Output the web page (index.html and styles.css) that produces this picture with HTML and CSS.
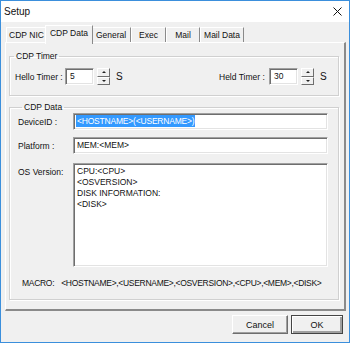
FILE: index.html
```html
<!DOCTYPE html>
<html lang="en">
<head>
  <meta charset="UTF-8">
  <meta name="viewport" content="width=device-width, initial-scale=1.0">
  <title>Setup</title>
  <link rel="stylesheet" href="styles.css">
</head>
<body>
  <div class="window">
    <!-- Barre de titre -->
    <div class="titlebar">
      <span class="title">Setup</span>
      <svg class="close" width="9" height="9" viewBox="0 0 9 9">
        <path d="M0.5 0.5 L8.5 8.5 M8.5 0.5 L0.5 8.5" stroke="#111" stroke-width="1" fill="none"/>
      </svg>
    </div>

    <div class="client">
      <!-- Onglets -->
      <div class="tabs">
        <div class="tab tab-nic">CDP NIC</div>
        <div class="tab tab-data active">CDP Data</div>
        <div class="tab tab-general">General</div>
        <div class="tab tab-exec">Exec</div>
        <div class="tab tab-mail">Mail</div>
        <div class="tab tab-maildata">Mail Data</div>
      </div>

      <div class="panel">
        <fieldset class="group timer-group">
          <legend>CDP Timer</legend>
          <div class="timer-row">
            <div class="timer">
              <span class="timer-label">Hello Timer :</span>
              <span class="field num">5</span>
              <span class="spin"><span class="spin-btn up"></span><span class="spin-btn down"></span></span>
              <span class="unit">S</span>
            </div>
            <div class="timer timer-right">
              <span class="timer-label">Held Timer :</span>
              <span class="field num">30</span>
              <span class="spin"><span class="spin-btn up"></span><span class="spin-btn down"></span></span>
              <span class="unit">S</span>
            </div>
          </div>
        </fieldset>

        <fieldset class="group data-group">
          <legend>CDP Data</legend>
          <div class="form-row">
            <span class="form-label">DeviceID :</span>
            <div class="field wide"><span class="sel">&lt;HOSTNAME&gt;(&lt;USERNAME&gt;)</span></div>
          </div>
          <div class="form-row row-platform">
            <span class="form-label">Platform :</span>
            <div class="field wide">MEM:&lt;MEM&gt;</div>
          </div>
          <div class="form-row row-os">
            <span class="form-label">OS Version:</span>
            <div class="field wide multiline">
              <div>CPU:&lt;CPU&gt;</div>
              <div>&lt;OSVERSION&gt;</div>
              <div>DISK INFORMATION:</div>
              <div>&lt;DISK&gt;</div>
            </div>
          </div>
          <p class="macro"><span class="macro-key">MACRO:</span>&lt;HOSTNAME&gt;,&lt;USERNAME&gt;,&lt;OSVERSION&gt;,&lt;CPU&gt;,&lt;MEM&gt;,&lt;DISK&gt;</p>
        </fieldset>
      </div>

      <!-- Boutons -->
      <div class="buttons">
        <button class="btn btn-cancel">Cancel</button>
        <button class="btn btn-ok">OK</button>
      </div>
    </div>
  </div>
</body>
</html>
```

FILE: styles.css
```css
body {
  margin: 0;
  font-family: 'Liberation Sans', Arial, sans-serif;
  font-size: 8.5px;
  color: #111;
}

.window {
  width: 350px;
  height: 343px;
  box-sizing: border-box;
  border: 1px solid #3b8fdc;
  display: flex;
  flex-direction: column;
  background-color: #f0f0f0;
}

.titlebar {
  height: 21px;
  background-color: #fff;
  display: flex;
  align-items: center;
  justify-content: space-between;
  padding: 0 7px 0 3px;
}

.title {
  font-size: 10px;
}

.client {
  flex: 1;
  padding: 3px 3px 0 4px;
}

/* Onglets */
.tabs {
  display: flex;
  align-items: flex-end;
  height: 17px;
  padding-left: 1px;
  position: relative;
  z-index: 1;
}

.tab {
  height: 15px;
  box-sizing: border-box;
  border-top: 1px solid #fff;
  border-left: 1px solid #fff;
  border-right: 1px solid #8a8a8a;
  text-align: center;
  line-height: 14px;
  white-space: nowrap;
}

.tab-nic { width: 41px; }
.tab-general { width: 40px; }
.tab-exec { width: 35px; }
.tab-mail { width: 34px; }
.tab-maildata { width: 44px; }

.tab.active {
  width: 48px;
  height: 19px;
  margin: 0 -2px -2px -2px;
  background-color: #f0f0f0;
  line-height: 15px;
  position: relative;
  z-index: 2;
  padding-bottom: 2px;
}

.panel {
  height: 269px;
  box-sizing: border-box;
  border-top: 1px solid #fff;
  border-left: 1px solid #fff;
  border-right: 2px solid #8a8a8a;
  border-bottom: 2px solid #8a8a8a;
  padding: 0 5px 0 3px;
}

/* Cadres */
.group {
  margin: 0;
  padding: 0;
  border: 1px solid #d0d0d0;
  box-shadow: inset 1px 1px #fff, 1px 1px #fff;
  min-inline-size: 0;
}

.group legend {
  margin-left: 4px;
  padding: 0 2px;
  line-height: 11px;
}

.timer-group {
  margin-top: 8px;
}

.timer-row {
  display: flex;
  align-items: center;
  padding: 6px 10px 10px 5px;
}

.timer {
  display: flex;
  align-items: center;
}

.timer-right {
  margin-left: auto;
}

.timer-label {
  width: 51px;
  white-space: nowrap;
}

.timer .timer-label:first-child {
  width: 50px;
}

.field {
  height: 17px;
  box-sizing: border-box;
  background-color: #fff;
  border: 1px solid;
  border-color: #a0a0a0 #fff #fff #a0a0a0;
  box-shadow: inset 1px 1px #6e6e6e, inset -1px -1px #e3e3e3;
  padding: 0 3px;
  line-height: 15px;
  white-space: nowrap;
}

.num {
  width: 29px;
  padding-left: 4px;
}

.spin {
  width: 13px;
  height: 17px;
  margin-left: 3px;
  display: flex;
  flex-direction: column;
}

.spin-btn {
  flex: 1;
  box-sizing: border-box;
  border: 1px solid;
  border-color: #fff #6e6e6e #6e6e6e #fff;
  background-color: #f0f0f0;
  display: flex;
  align-items: center;
  justify-content: center;
}

.spin-btn::after {
  content: '';
  border-left: 2px solid transparent;
  border-right: 2px solid transparent;
}

.spin-btn.up::after {
  border-bottom: 2px solid #222;
}

.spin-btn.down::after {
  border-top: 2px solid #222;
}

.unit {
  width: 8px;
  margin-left: 6px;
  font-size: 10px;
}

.data-group {
  margin-top: 6px;
  padding: 0 10px 10px 8px;
}

.form-row {
  display: flex;
  align-items: center;
}

.row-platform {
  margin-top: 7px;
}

.row-os {
  margin-top: 9px;
  align-items: flex-start;
}

.form-label {
  width: 55px;
  flex-shrink: 0;
  white-space: nowrap;
}

.row-os .form-label {
  padding-top: 4px;
}

.wide {
  flex: 1;
}

.sel {
  display: inline-block;
  background-color: #3399ff;
  color: #fff;
  line-height: 12px;
  vertical-align: top;
  margin-top: 1px;
  padding: 0 1px;
  margin-left: -1px;
  letter-spacing: -0.2px;
}

.multiline {
  height: 104px;
  padding-top: 2px;
  line-height: 11px;
}

.macro {
  margin: 11px 0 0 4px;
  line-height: 11px;
  white-space: nowrap;
  letter-spacing: -0.3px;
}

.macro-key {
  margin-right: 7px;
}

/* Boutons */
.buttons {
  display: flex;
  justify-content: flex-end;
  gap: 3px;
  margin-top: 4px;
  padding-right: 3px;
}

.btn {
  height: 19px;
  box-sizing: border-box;
  font-family: inherit;
  font-size: 9px;
  color: #111;
  background-color: #f0f0f0;
  border: 1px solid;
  border-color: #fff #6e6e6e #6e6e6e #fff;
  box-shadow: inset -1px -1px #a0a0a0;
  padding: 0;
}

.btn-cancel {
  width: 56px;
}

.btn-ok {
  width: 52px;
  border-color: #444;
  box-shadow: inset 1px 1px #fff, inset -2px -2px #a0a0a0;
}
```
